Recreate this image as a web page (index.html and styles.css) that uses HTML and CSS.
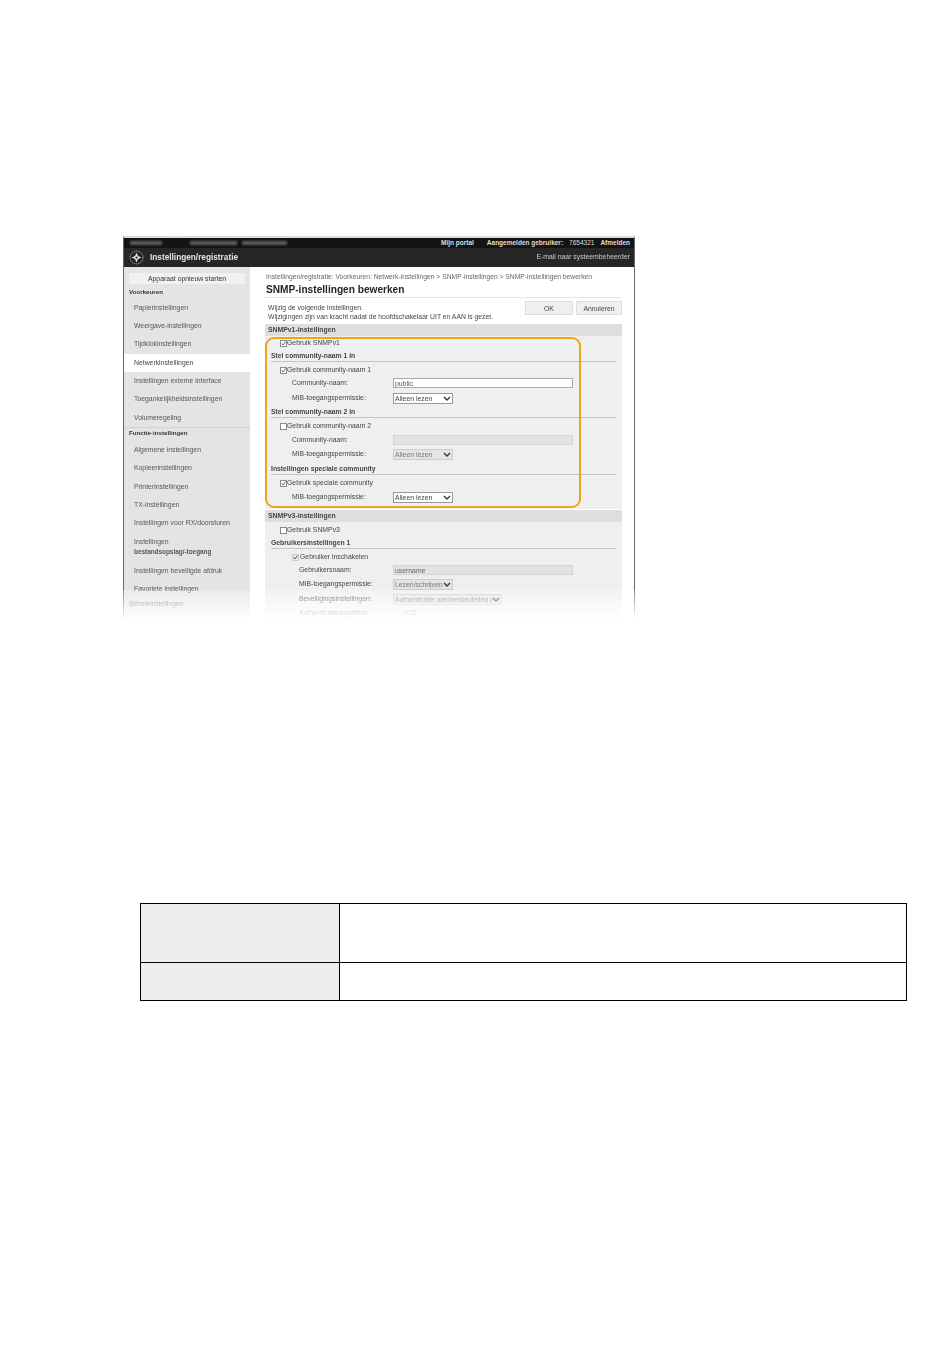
FILE: index.html
```html
<!DOCTYPE html>
<html lang="nl">
<head>
<meta charset="utf-8">
<title>SNMP-instellingen bewerken</title>
<link rel="stylesheet" href="styles.css">
</head>
<body>
<div class="shot">
  <div class="ui">
    <div class="topbar">
      <div class="masked"><span class="mask m1"></span><span class="mask m2"></span><span class="mask m3"></span></div>
      <div class="toplinks"><span class="tl-portal">Mijn portal</span><span class="tl-user">Aangemelden gebruiker:</span><span class="tl-id">7654321</span><span>Afmelden</span></div>
    </div>
    <div class="header">
      <div class="brand">
        <svg class="logo" viewBox="0 0 20 20" width="15" height="15" aria-hidden="true">
          <circle cx="10" cy="10" r="8.6" fill="none" stroke="#ddd" stroke-width="0.9" stroke-dasharray="2 1"/>
          <path d="M10 3.5 L12 8 L16.5 10 L12 12 L10 16.5 L8 12 L3.5 10 L8 8 Z" fill="#e8e8e8"/>
          <circle cx="10" cy="10" r="1.5" fill="#222"/>
        </svg>
        <span class="brand-name">Instellingen/registratie</span>
      </div>
      <span class="mailadmin">E-mail naar systeembeheerder</span>
    </div>
    <div class="body">
      <nav class="side">
        <div class="restart">Apparaat opnieuw starten</div>
        <div class="side-title">Voorkeuren</div>
        <div class="side-item">Papierinstellingen</div>
        <div class="side-item">Weergave-instellingen</div>
        <div class="side-item">Tijdklokinstellingen</div>
        <div class="side-item active">Netwerkinstellingen</div>
        <div class="side-item">Instellingen externe interface</div>
        <div class="side-item">Toegankelijkheidsinstellingen</div>
        <div class="side-item">Volumeregeling</div>
        <div class="side-title second">Functie-instellingen</div>
        <div class="side-item">Algemene instellingen</div>
        <div class="side-item">Kopieerinstellingen</div>
        <div class="side-item">Printerinstellingen</div>
        <div class="side-item">TX-instellingen</div>
        <div class="side-item">Instellingen voor RX/doorsturen</div>
        <div class="side-item double">Instellingen<br><span class="small">bestandsopslag/-toegang</span></div>
        <div class="side-item">Instellingen beveiligde afdruk</div>
        <div class="side-item">Favoriete instellingen</div>
        <div class="side-title third">Beheerinstellingen</div>
      </nav>
      <main class="main">
        <div class="crumbs">Instellingen/registratie: Voorkeuren: Netwerk-instellingen &gt; SNMP-instellingen &gt; SNMP-instellingen bewerken</div>
        <h1 class="title">SNMP-instellingen bewerken</h1>
        <div class="intro">
          <p class="note">Wijzig de volgende instellingen.<br>Wijzigingen zijn van kracht nadat de hoofdschakelaar UIT en AAN is gezet.</p>
          <div class="actions"><button class="btn">OK</button><button class="btn">Annuleren</button></div>
        </div>
        <div class="sec-head">SNMPv1-instellingen</div>
        <section class="sec">
          <label class="cb first"><input type="checkbox" checked><span>Gebruik SNMPv1</span></label>
          <div class="sub">Stel community-naam 1 in</div>
          <label class="cb"><input type="checkbox" checked><span>Gebruik community-naam 1</span></label>
          <div class="field raised"><span class="lbl">Community-naam:</span><input class="txt" type="text" value="public"></div>
          <div class="field"><span class="lbl">MIB-toegangspermissie:</span><select class="sel"><option>Alleen lezen</option></select></div>
          <div class="sub">Stel community-naam 2 in</div>
          <label class="cb"><input type="checkbox"><span>Gebruik community-naam 2</span></label>
          <div class="field"><span class="lbl">Community-naam:</span><input class="txt" type="text" disabled></div>
          <div class="field"><span class="lbl">MIB-toegangspermissie:</span><select class="sel" disabled><option>Alleen lezen</option></select></div>
          <div class="sub spaced">Instellingen speciale community</div>
          <label class="cb"><input type="checkbox" checked><span>Gebruik speciale community</span></label>
          <div class="field"><span class="lbl">MIB-toegangspermissie:</span><select class="sel"><option>Alleen lezen</option></select></div>
        </section>
        <div class="sec-head">SNMPv3-instellingen</div>
        <section class="sec">
          <label class="cb tight"><input type="checkbox"><span>Gebruik SNMPv3</span></label>
          <div class="sub">Gebruikersinstellingen 1</div>
          <label class="cb deep"><input type="checkbox" checked disabled><span>Gebruiker inschakelen</span></label>
          <div class="field deep raised"><span class="lbl">Gebruikersnaam:</span><input class="txt" type="text" value="username" disabled></div>
          <div class="field deep raised"><span class="lbl">MIB-toegangspermissie:</span><select class="sel" disabled><option>Lezen/schrijven</option></select></div>
          <div class="field deep"><span class="lbl">Beveiligingsinstellingen:</span><select class="sel wide-sel" disabled><option>Authenticatie aan/versleuteling aan</option></select></div>
          <div class="field deep"><span class="lbl">Authenticatiealgoritme:</span><span class="radio">MD5</span></div>
        </section>
      </main>
    </div>
  </div>
  <div class="callout"></div>
  <div class="fade"></div>
</div>
<table class="info">
  <tr class="tall"><th></th><td></td></tr>
  <tr class="short"><th></th><td></td></tr>
</table>
</body>
</html>
```
FILE: styles.css
```css
* { box-sizing: border-box; }
html, body { margin: 0; background: #fff; }
body {
  height: 1369px;
  overflow: hidden;
  padding: 236px 0 0 0;
  font-family: "Liberation Sans", Arial, sans-serif;
  color: #444;
}
.shot {
  position: relative;
  width: 512px;
  height: 384px;
  margin-left: 123px;
  overflow: hidden;
}
.ui {
  height: 100%;
  border-left: 1px solid #666;
  border-right: 1px solid #666;
  border-top: 2px solid #ddd;
  font-size: 6.85px;
  line-height: 1.2;
  filter: blur(0.55px);
  opacity: 0.99;
}
.topbar {
  height: 10px;
  background: #111;
  color: #ddd;
  display: flex;
  justify-content: space-between;
  align-items: center;
  padding: 0 4px 0 6px;
  font-weight: bold;
  font-size: 6.5px;
}
.masked { display: flex; gap: 5px; }
.mask { height: 4px; background: #5c5c5c; filter: blur(1px); }
.m1 { width: 32px; margin-right: 23px; }
.m2 { width: 47px; }
.m3 { width: 45px; }
.toplinks { display: flex; gap: 6px; }
.tl-portal { margin-right: 7px; }
.tl-id { font-weight: normal; }
.header {
  height: 19px;
  background: #242424;
  color: #eee;
  display: flex;
  justify-content: space-between;
  align-items: center;
  padding: 0 4px 0 5px;
}
.brand { display: flex; align-items: center; gap: 6px; }
.brand-name { font-size: 8.25px; font-weight: bold; color: #e6e6e6; }
.mailadmin { color: #ccc; }
.body { display: flex; height: 353px; }
.side {
  width: 126px;
  flex: none;
  background: #e4e4e4;
  padding-top: 6px;
}
.restart {
  margin: 0 5px;
  height: 11px;
  background: #f1f1f1;
  text-align: center;
  line-height: 11px;
  color: #333;
}
.side-title {
  font-weight: bold;
  color: #333;
  padding-left: 5px;
  height: 11px;
  line-height: 11px;
  margin: 2px 0 1.5px;
  font-size: 6.2px;
}
.side-title.second { border-top: 1px solid #d2d2d2; margin: 0 0 1.5px; height: 12px; line-height: 9px; }
.side-title.third { color: #666; font-weight: normal; margin: 0; font-size: 6.6px; }
.side-item {
  height: 18.4px;
  line-height: 18.4px;
  padding-left: 10px;
  color: #555;
}
.side-item.active { background: #fff; color: #444; }
.side-item.double { height: 29px; line-height: 10px; padding-top: 4px; }
.side-item .small { font-size: 6.4px; font-weight: bold; color: #555; }
.main { flex: 1; background: #fff; padding: 4px 12px 0 15px; min-width: 0; }
.crumbs { padding-left: 1px; height: 11px; line-height: 11px; font-size: 6.75px; color: #666; white-space: nowrap; }
.title {
  margin: 0;
  font-size: 10.15px;
  font-weight: bold;
  color: #222;
  height: 16px;
  line-height: 15px;
  padding-left: 1px;
  border-bottom: 1px solid #e2e2e2;
}
.intro { display: flex; justify-content: space-between; height: 26px; padding-top: 3px; }
.note { margin: 2px 0 0 3px; font-size: 6.8px; line-height: 9px; color: #444; }
.actions { display: flex; gap: 3px; }
.btn {
  height: 14px;
  width: 46px;
  padding: 0;
  border: 1px solid #ddd;
  background: #efefef;
  font: 6.85px "Liberation Sans", Arial, sans-serif;
  color: #444;
}
.actions .btn:first-child { width: 48px; }
.sec-head {
  height: 12px;
  line-height: 12px;
  background: #dedede;
  font-weight: bold;
  padding-left: 3px;
  color: #444;
}
.sec { background: #efefef; padding: 0 6px 5px 6px; margin-bottom: 1px; }
.cb { display: flex; align-items: center; height: 15px; padding: 2px 0 0 9px; color: #444; }
.cb.first { height: 13px; }
.cb.tight { height: 14px; }
.cb.deep { padding-left: 21px; }
.cb input {
  appearance: none;
  width: 7px;
  height: 7px;
  margin: 0;
  flex: none;
  border: 1px solid #8a8a8a;
  background: #fff;
}
.cb input:checked {
  background: #fff url("data:image/svg+xml,%3Csvg xmlns='http://www.w3.org/2000/svg' viewBox='0 0 7 7'%3E%3Cpath d='M1 3.5 L2.8 5.6 L6.4 0.6' fill='none' stroke='%23333' stroke-width='1.1'/%3E%3C/svg%3E") center / 100% no-repeat;
}
.cb input:disabled { border-color: #ccc; background-color: #e8e8e8; }
.cb.deep span { margin-left: 1px; }
.sub {
  height: 13px;
  line-height: 14px;
  font-weight: bold;
  color: #444;
  border-bottom: 1px solid #c4c4c4;
  white-space: nowrap;
  font-size: 6.8px;
}
.sub.spaced { margin-top: 1px; }
.field { display: flex; align-items: center; height: 14px; padding: 0 0 0 21px; }
.field.raised { padding-bottom: 2px; }
.field.deep { padding-left: 28px; }
.lbl { width: 101px; flex: none; color: #444; }
.field.deep .lbl { width: 94px; }
.txt {
  width: 180px;
  height: 10px;
  padding: 0 1px;
  border: 1px solid #aaa;
  background: #fff;
  font: 6.85px "Liberation Sans", Arial, sans-serif;
  color: #555;
}
.txt:disabled { background: #e2e2e2; border-color: #d4d4d4; color: #666; }
.sel {
  appearance: none;
  width: 60px;
  height: 11px;
  padding: 0 9px 0 1px;
  border: 1px solid #999;
  background: #fff url("data:image/svg+xml,%3Csvg xmlns='http://www.w3.org/2000/svg' viewBox='0 0 8 5'%3E%3Cpath d='M1 1 L4 4 L7 1' fill='none' stroke='%23333' stroke-width='1.4'/%3E%3C/svg%3E") right 1px center / 8px 5px no-repeat;
  font: 6.85px "Liberation Sans", Arial, sans-serif;
  color: #444;
}
.sel:disabled { background-color: #e4e4e4; border-color: #ccc; color: #777; opacity: 1; }
.wide-sel { width: 109px; }
.radio { font-size: 6.5px; color: #888; padding-left: 10px; }
.callout {
  position: absolute;
  left: 142px;
  top: 101px;
  width: 316px;
  height: 171px;
  border: 2px solid #eaa621;
  border-radius: 9px;
  box-shadow: 0 0 1px rgba(255,230,170,.8);
}
.fade {
  position: absolute;
  left: 0;
  right: 0;
  bottom: 0;
  height: 30px;
  background: linear-gradient(to bottom, rgba(255,255,255,.25), #fff);
}
.info {
  border-collapse: collapse;
  table-layout: fixed;
  width: 767px;
  margin: 283px 0 0 140px;
}
.info th, .info td { border: 1px solid #000; padding: 0; }
.info th { width: 199px; background: #eee; }
.info td { background: #fff; }
.tall { height: 59px; }
.short { height: 38px; }
```
